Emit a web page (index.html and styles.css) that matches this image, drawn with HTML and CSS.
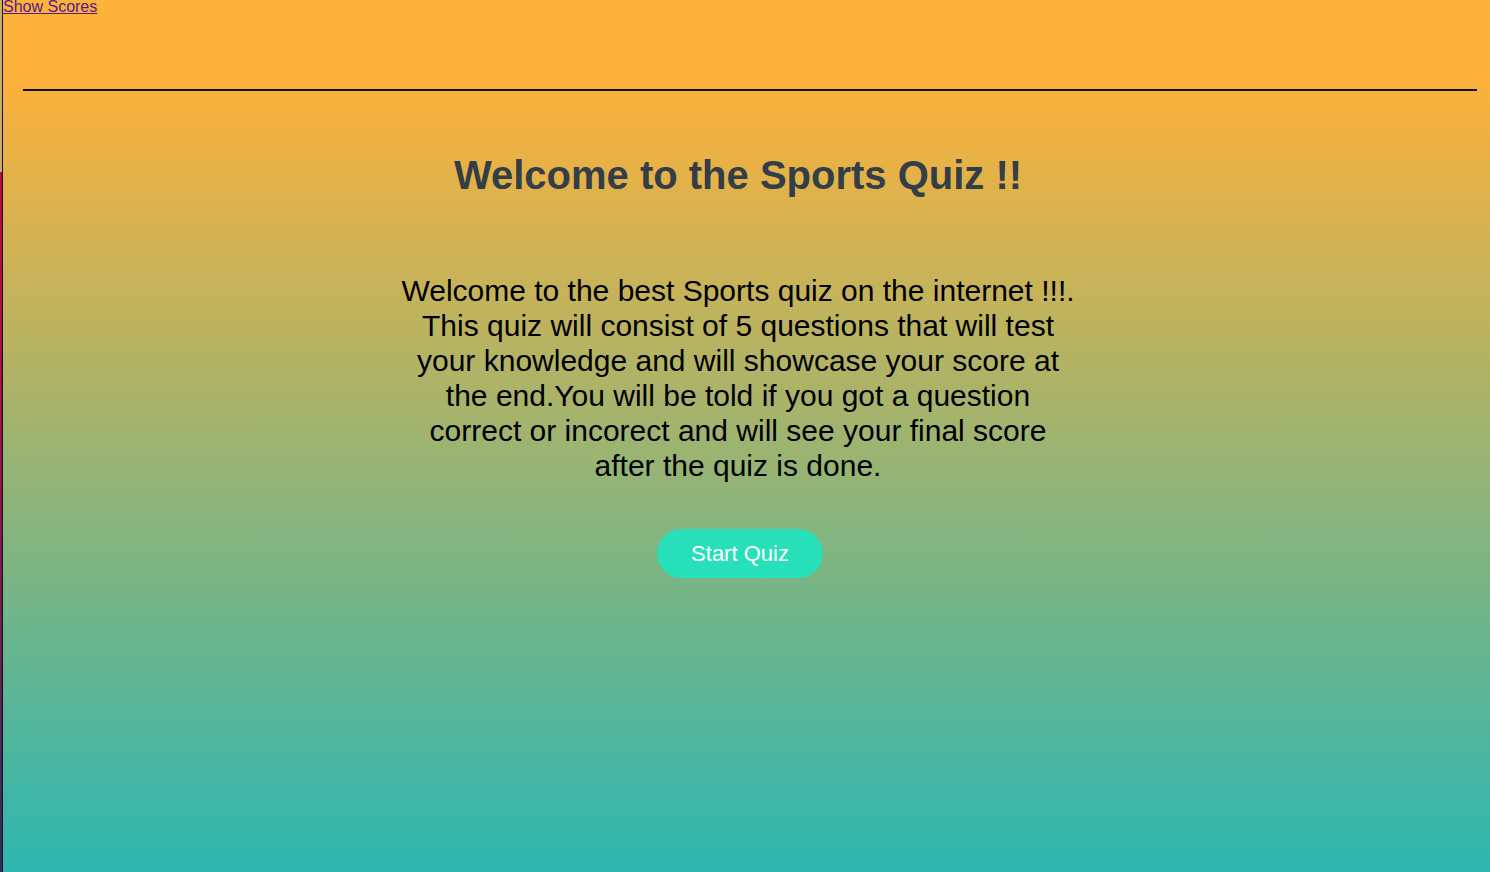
FILE: index.html
```html
<!DOCTYPE html>
<html>
<head>
<meta charset="utf-8">
<link rel="stylesheet" href="styles.css">
<title>Sports Quiz</title>
</head>
<body>
<div class="page">
  <aside class="strip">
    <div class="strip-top"></div>
    <div class="strip-bottom"></div>
  </aside>
  <main class="main">
    <a class="scores" href="#">Show Scores</a>
    <div class="rule"></div>
    <section class="intro">
      <h1 class="title">Welcome to the Sports Quiz !!</h1>
      <p class="text">Welcome to the best Sports quiz on the internet !!!. This quiz will consist of 5 questions that will test your knowledge and will showcase your score at the end.You will be told if you got a question correct or incorect and will see your final score after the quiz is done.</p>
      <button class="start">Start Quiz</button>
    </section>
  </main>
</div>
</body>
</html>
```

FILE: styles.css
```css
html, body {
  margin: 0;
  padding: 0;
  height: 100%;
}
body {
  font-family: "Liberation Sans", Arial, Helvetica, sans-serif;
  background: linear-gradient(180deg, #fdb23a 0%, #fbb13b 10%, #2cb7b1 100%);
  overflow: hidden;
}
.page {
  display: flex;
  height: 872px;
}
.strip {
  width: 2px;
  border-right: 1px solid #111;
  display: flex;
  flex-direction: column;
  flex: none;
}
.strip-top {
  height: 172px;
  background: #c9b061;
}
.strip-bottom {
  flex: 1;
  background: linear-gradient(180deg, #b5103a 0%, #8a1847 45%, #2c2f62 100%);
}
.main {
  flex: 1;
  display: flex;
  flex-direction: column;
}
.scores {
  font-size: 16px;
  color: #551a8b;
  line-height: 18px;
  margin-top: -2px;
  align-self: flex-start;
}
.rule {
  margin: 73px 13px 0 20px;
  height: 0;
  border-top: 2px solid #121212;
}
.intro {
  width: 1470px;
  display: flex;
  flex-direction: column;
  align-items: center;
}
.title {
  margin: 61px 0 0;
  font-size: 40px;
  font-weight: bold;
  color: #333e48;
  line-height: 46px;
}
.text {
  margin: 75px 0 0;
  width: 676px;
  text-align: center;
  font-size: 30px;
  line-height: 35px;
  color: #000;
}
.start {
  margin: 46px 0 0 4px;
  width: 166px;
  height: 49px;
  border: none;
  border-radius: 25px;
  background: #27e0b9;
  color: #fff;
  font-family: "Liberation Sans", Arial, sans-serif;
  font-size: 22px;
  padding: 0;
}
```
